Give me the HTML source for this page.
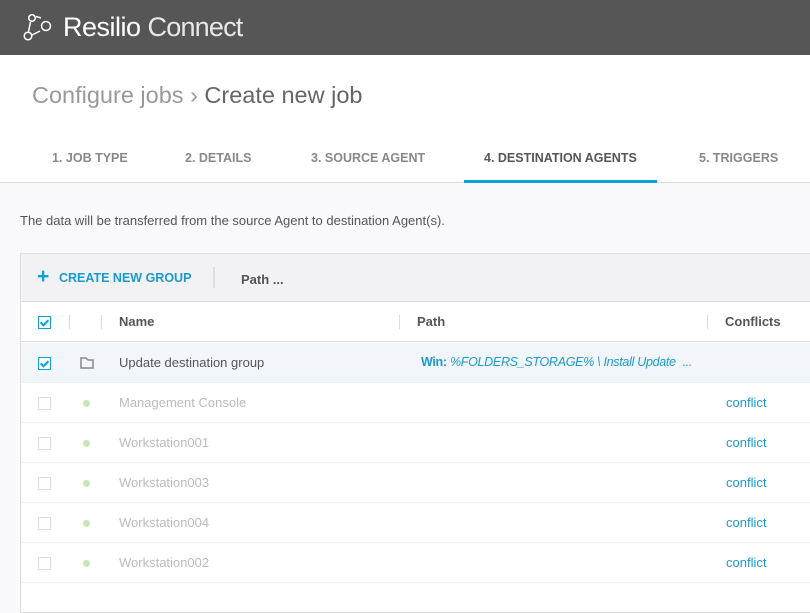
<!DOCTYPE html>
<html><head><style>
*{margin:0;padding:0;box-sizing:border-box}
body{width:810px;height:593px;overflow:hidden;font-family:"Liberation Sans",sans-serif;background:#f9f9fb;position:relative;color:#555}
.hdr{position:absolute;left:0;top:0;width:810px;height:55px;background:#565656;color:#fff}
.hdr .t{position:absolute;left:63px;top:12px;font-size:27px;letter-spacing:-0.5px}
.top{position:absolute;left:0;top:55px;width:810px;height:128px;background:#fff;border-bottom:1px solid #ddd}
.bc{position:absolute;left:32px;top:82px;font-size:23.5px;color:#999}
.bc b{color:#666;font-weight:normal}
.tab{position:absolute;top:151px;font-size:12.5px;font-weight:bold;color:#888}
.tab.a{color:#555}
.ul{position:absolute;left:464px;top:180px;width:193px;height:3px;background:#0ea0d6}
.desc{position:absolute;left:20px;top:213px;font-size:13px;color:#555}
.panel{position:absolute;left:20px;top:253px;width:800px;height:360px;background:#fff;border:1px solid #ddd}
.tb{position:absolute;left:0;top:0;width:100%;height:48px;background:#f2f2f4;border-bottom:1px solid #ddd}
.row{position:absolute;left:0;width:100%;height:40px;border-bottom:1px solid #f0f0f0;font-size:13px}
.cb{position:absolute;left:17px;top:14px;width:13px;height:13px;border:1px solid #ddd;background:#fff}
.cb.on{border-color:#0ea0d6}
.cb.on:after{content:"";position:absolute;left:3px;top:1px;width:3px;height:6px;border:solid #0ea0d6;border-width:0 2px 2px 0;transform:rotate(45deg)}
.dot{position:absolute;left:62px;top:17px;width:7px;height:7px;border-radius:50%;background:#c8e6b3}
.nm{position:absolute;left:98px;top:12px;color:#bbb}
.cf{position:absolute;left:705px;top:12px;color:#1a9bd0}
.sep{position:absolute;width:1px;height:14px;background:#ddd;top:13px}
</style></head><body>
<div class="hdr">
<svg style="position:absolute;left:22px;top:13px" width="32" height="30" viewBox="0 0 32 30" fill="none" stroke="#fff" stroke-width="1.5"><circle cx="10" cy="5" r="3.3"/><circle cx="24" cy="13" r="4.5"/><circle cx="6" cy="23" r="3.8"/><path d="M14 3.5l5 1.5M8.5 9l-2 9.5M10 22l8-4"/></svg>
<div class="t">Resilio <span style="color:#e8e8e8;letter-spacing:-0.8px">Connect</span></div></div>
<div class="top"></div>
<div class="bc">Configure jobs › <b>Create new job</b></div>
<div class="tab" style="left:52px">1. JOB TYPE</div>
<div class="tab" style="left:185px">2. DETAILS</div>
<div class="tab" style="left:311px">3. SOURCE AGENT</div>
<div class="tab a" style="left:484px">4. DESTINATION AGENTS</div>
<div class="tab" style="left:699px">5. TRIGGERS</div>
<div class="ul"></div>
<div class="desc">The data will be transferred from the source Agent to destination Agent(s).</div>
<div class="panel">
<div class="tb">
<div style="position:absolute;left:16px;top:11px;font-size:21px;font-weight:bold;color:#0ea0d6">+</div>
<div style="position:absolute;left:38px;top:17px;font-size:12.5px;font-weight:bold;color:#1a9bd0">CREATE NEW GROUP</div>
<div style="position:absolute;left:192px;top:13px;width:2px;height:21px;background:#ddd"></div>
<div style="position:absolute;left:220px;top:18px;font-size:13px;font-weight:bold;color:#555">Path ...</div>
</div>
<div class="row" style="top:48px;border-bottom:1px solid #ddd;font-weight:bold;color:#555">
<div class="cb on"></div><div class="sep" style="left:48px"></div><div class="sep" style="left:80px"></div>
<div style="position:absolute;left:98px;top:12px">Name</div><div class="sep" style="left:378px"></div>
<div style="position:absolute;left:396px;top:12px">Path</div><div class="sep" style="left:686px"></div>
<div style="position:absolute;left:704px;top:12px">Conflicts</div></div>
<div class="row" style="top:89px;background:#f2f6fa">
<div class="cb on"></div>
<svg style="position:absolute;left:59px;top:14px" width="14" height="12" viewBox="0 0 14 12" fill="none" stroke="#888" stroke-width="1.5"><path d="M1 1h5l2 2h5v8H1z"/></svg>
<div class="nm" style="color:#555">Update destination group</div>
<div style="position:absolute;left:400px;top:12px;color:#1a9bd0;font-size:12.5px;letter-spacing:-0.3px"><b>Win:</b> <i>%FOLDERS_STORAGE% \ Install Update</i> &nbsp;...</div></div>
<div class="row" style="top:129px"><div class="cb"></div><div class="dot"></div><div class="nm">Management Console</div><div class="cf">conflict</div></div>
<div class="row" style="top:169px"><div class="cb"></div><div class="dot"></div><div class="nm">Workstation001</div><div class="cf">conflict</div></div>
<div class="row" style="top:209px"><div class="cb"></div><div class="dot"></div><div class="nm">Workstation003</div><div class="cf">conflict</div></div>
<div class="row" style="top:249px"><div class="cb"></div><div class="dot"></div><div class="nm">Workstation004</div><div class="cf">conflict</div></div>
<div class="row" style="top:289px"><div class="cb"></div><div class="dot"></div><div class="nm">Workstation002</div><div class="cf">conflict</div></div>
</div>
</body></html>
